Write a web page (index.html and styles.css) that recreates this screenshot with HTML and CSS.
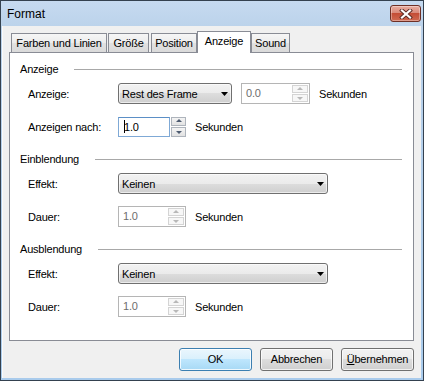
FILE: index.html
```html
<!DOCTYPE html>
<html lang="de">
<head>
<meta charset="UTF-8">
<meta name="viewport" content="width=device-width, initial-scale=1.0">
<title>Format</title>
<link rel="stylesheet" href="styles.css">
</head>
<body>
<div class="window">
    <div class="titlebar">
        <span class="title">Format</span>
        <div class="close">
            <svg width="14" height="10" viewBox="0 0 14 10">
                <path d="M3 1.5 L11 8.5 M11 1.5 L3 8.5" stroke="#5a2a24" stroke-width="4" stroke-linecap="square"/>
                <path d="M3 1.5 L11 8.5 M11 1.5 L3 8.5" stroke="#fff" stroke-width="2.2" stroke-linecap="square"/>
            </svg>
        </div>
    </div>
    <div class="client">
        <div class="tabs">
            <div class="tab t-lines">Farben und Linien</div>
            <div class="tab t-size">Größe</div>
            <div class="tab t-pos">Position</div>
            <div class="tab t-show active">Anzeige</div>
            <div class="tab t-sound">Sound</div>
        </div>
        <div class="panel">
            <div class="group-head"><span>Anzeige</span><i class="rule"></i></div>
            <div class="row">
                <span class="lbl">Anzeige:</span>
                <div class="combo short">
                    <span>Rest des Frame</span>
                    <svg class="arrow" width="7" height="4" viewBox="0 0 7 4"><polygon points="0,0 7,0 3.5,4" fill="#000"/></svg>
                </div>
                <div class="spin off w69">
                    <span class="val">0.0</span>
                    <span class="btns"><i class="up"></i><i class="down"></i></span>
                </div>
                <span class="unit">Sekunden</span>
            </div>
            <div class="row">
                <span class="lbl">Anzeigen nach:</span>
                <div class="edit"><i class="caret"></i>1.0</div>
                <span class="btns loose"><i class="up"></i><i class="down"></i></span>
                <span class="unit">Sekunden</span>
            </div>

            <div class="group-head"><span>Einblendung</span><i class="rule"></i></div>
            <div class="row">
                <span class="lbl">Effekt:</span>
                <div class="combo long">
                    <span>Keinen</span>
                    <svg class="arrow" width="7" height="4" viewBox="0 0 7 4"><polygon points="0,0 7,0 3.5,4" fill="#000"/></svg>
                </div>
            </div>
            <div class="row">
                <span class="lbl">Dauer:</span>
                <div class="spin off w68">
                    <span class="val">1.0</span>
                    <span class="btns"><i class="up"></i><i class="down"></i></span>
                </div>
                <span class="unit">Sekunden</span>
            </div>

            <div class="group-head"><span>Ausblendung</span><i class="rule"></i></div>
            <div class="row">
                <span class="lbl">Effekt:</span>
                <div class="combo long">
                    <span>Keinen</span>
                    <svg class="arrow" width="7" height="4" viewBox="0 0 7 4"><polygon points="0,0 7,0 3.5,4" fill="#000"/></svg>
                </div>
            </div>
            <div class="row">
                <span class="lbl">Dauer:</span>
                <div class="spin off w68">
                    <span class="val">1.0</span>
                    <span class="btns"><i class="up"></i><i class="down"></i></span>
                </div>
                <span class="unit">Sekunden</span>
            </div>
        </div>
        <div class="buttons">
            <div class="btn default">OK</div>
            <div class="btn">Abbrechen</div>
            <div class="btn"><u>Ü</u>bernehmen</div>
        </div>
    </div>
</div>
</body>
</html>
```

FILE: styles.css
```css
* {
    box-sizing: border-box;
}
body {
    margin: 0;
    font-family: "Liberation Sans", Arial, sans-serif;
    font-size: 11px;
    letter-spacing: -0.2px;
    color: #000;
    background: #fff;
}
.window {
    width: 424px;
    height: 381px;
    display: flex;
    flex-direction: column;
    padding: 0 2px 2px 2px;
    border: 1px solid #34414f;
    background: linear-gradient(#c3d7ee, #b9d1ea 40px, #a9cbec);
}
.titlebar {
    height: 25px;
    margin: 0 -2px;
    display: flex;
    justify-content: space-between;
    align-items: flex-start;
    padding: 0 2px 0 6px;
    background: linear-gradient(#c6daf0, #bcd3eb);
}
.title {
    font-size: 12px;
    letter-spacing: 0;
    line-height: 26px;
}
.close {
    width: 31px;
    height: 17px;
    margin-top: 4px;
    display: flex;
    align-items: center;
    justify-content: center;
    border: 1px solid #6e2f25;
    border-radius: 3px;
    background: linear-gradient(#e9ada0, #d98a7b 45%, #c44d36 50%, #cf6a52);
    box-shadow: inset 0 0 0 1px rgba(255, 255, 255, 0.35);
}
.client {
    flex: 1;
    display: flex;
    flex-direction: column;
    padding: 5px 7px 7px 6px;
    background: #f0f0f0;
    border-left: 1px solid #fafafa;
    margin-left: -1px;
}

/* tabs */
.tabs {
    display: flex;
    align-items: flex-end;
    height: 22px;
    margin-bottom: -1px;
    padding-left: 2px;
    position: relative;
    z-index: 1;
}
.tab {
    height: 19px;
    margin: 0 1px 1px 0;
    line-height: 18px;
    text-align: center;
    white-space: nowrap;
    border: 1px solid #898c95;
    border-bottom: 0;
    background: linear-gradient(#f6f6f6, #ececec 50%, #e1e1e1 50%, #dadada);
}
.t-lines { width: 96px; }
.t-size { width: 41px; margin-right: 2px; }
.t-pos { width: 46px; margin-right: 0; }
.t-show { width: 54px; }
.t-sound { width: 39px; }
.tab.active {
    height: 22px;
    margin: 0;
    line-height: 19px;
    background: #fff;
    position: relative;
}
.panel {
    height: 289px;
    padding: 9px 11px 0 10px;
    background: #fff;
    border: 1px solid #898c95;
}

/* groups and rows */
.group-head {
    display: flex;
    align-items: center;
    height: 14px;
    margin-top: 15px;
}
.group-head:first-child {
    margin-top: 0;
}
.group-head .rule {
    flex: 1;
    margin-left: 16px;
    border-top: 1px solid #a8a8a8;
}
.row {
    display: flex;
    align-items: center;
    height: 21px;
    margin-top: 7px;
    padding-left: 8px;
}
.row + .row {
    margin-top: 12px;
}
.lbl {
    width: 90px;
}
.unit {
    margin-left: 9px;
}

.combo {
    height: 21px;
    display: flex;
    align-items: center;
    justify-content: space-between;
    padding: 0 3px 0 3px;
    border: 1px solid #707070;
    border-radius: 3px;
    background: linear-gradient(#f2f2f2, #ebebeb 50%, #dddddd 50%, #cfcfcf);
    box-shadow: inset 0 0 0 1px rgba(255, 255, 255, 0.6);
}
.combo.short {
    width: 114px;
}
.combo.long {
    width: 210px;
}
.combo span {
    padding-top: 1px;
}

.spin {
    height: 21px;
    display: flex;
    align-items: stretch;
    border: 1px solid #b5b5b5;
    background: #fff;
}
.spin.w69 {
    width: 69px;
    margin-left: 9px;
}
.spin.w68 {
    width: 68px;
}
.spin .val {
    flex: 1;
    padding-left: 4px;
    line-height: 19px;
    color: #6d6d6d;
}
.btns {
    width: 17px;
    display: flex;
    flex-direction: column;
    gap: 1px;
    padding: 1px 1px 1px 0;
}
.btns i {
    flex: 1;
    position: relative;
    border: 1px solid #d4d4d4;
    background: #f7f7f7;
}
.btns i::after {
    content: "";
    position: absolute;
    left: 50%;
    top: 50%;
    margin: -1px 0 0 -3px;
    border-left: 3px solid transparent;
    border-right: 3px solid transparent;
}
.btns .up::after {
    border-bottom: 3px solid #b8b8b8;
    margin-top: -2px;
}
.btns .down::after {
    border-top: 3px solid #b8b8b8;
}

.edit {
    width: 52px;
    height: 20px;
    display: flex;
    align-items: center;
    padding-left: 5px;
    border: 1px solid #7fa9d6;
    border-top-color: #5b8fc6;
    background: #fff;
}
.caret {
    width: 1px;
    height: 13px;
    margin-right: -1px;
    background: #000;
}
.btns.loose {
    width: 15px;
    height: 20px;
    margin-left: 1px;
    padding: 0;
}
.btns.loose i {
    border-color: #aeb4bc;
    background: linear-gradient(#f4f4f4, #e2e2e2);
}
.btns.loose .up::after {
    border-bottom-color: #4d5b70;
}
.btns.loose .down::after {
    border-top-color: #4d5b70;
}

/* bottom buttons */
.buttons {
    display: flex;
    justify-content: flex-end;
    gap: 8px;
    margin-top: 7px;
}
.btn {
    width: 73px;
    height: 23px;
    line-height: 21px;
    text-align: center;
    border: 1px solid #707070;
    border-radius: 3px;
    background: linear-gradient(#f2f2f2, #ebebeb 50%, #dddddd 50%, #cfcfcf);
    box-shadow: inset 0 0 0 1px rgba(255, 255, 255, 0.7);
}
.btn.default {
    border-color: #3c7fb1;
    background: linear-gradient(#eaf6fd, #d9f0fc 50%, #bee6fd 50%, #a7d9f5);
    box-shadow: inset 0 0 0 1px rgba(255, 255, 255, 0.8);
}
```
